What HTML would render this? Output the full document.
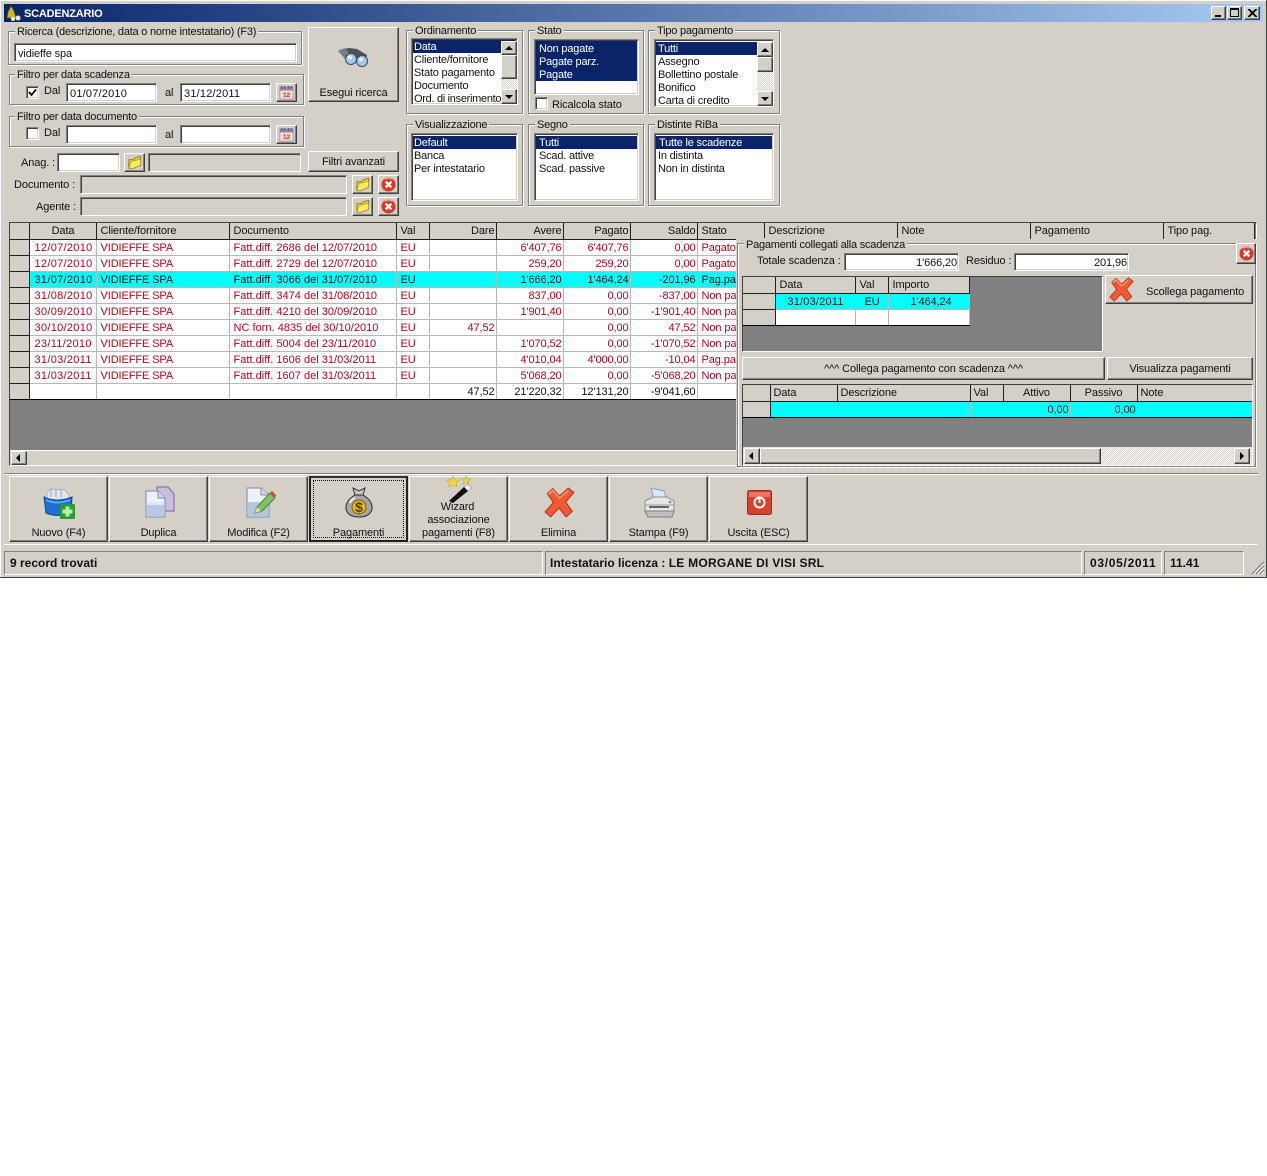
<!DOCTYPE html>
<html><head><meta charset="utf-8"><title>Scadenzario</title>
<style>
html,body{margin:0;padding:0;background:#fff;}
body{width:1267px;height:1176px;position:relative;overflow:hidden;font:11px/13px "Liberation Sans",sans-serif;color:#111;}
div,span,svg,table{position:absolute;box-sizing:border-box;}
td,th,td *{position:static;}
.t{white-space:nowrap;height:13px;padding-top:1px;letter-spacing:-.12px;}
.g{border:1px solid #808080;box-shadow:inset 1px 1px 0 #fff,1px 1px 0 #fff;}
.l{background:#d4d0c8;padding:1px 2px 0;white-space:nowrap;height:13px;letter-spacing:-.22px;}
.s{background:#fff;border:1px solid;border-color:#808080 #fff #fff #808080;box-shadow:inset 1px 1px 0 #404040,inset -1px -1px 0 #d4d0c8;padding:4px 0 0 3px;white-space:nowrap;letter-spacing:-.12px;}
.d{background:#d4d0c8;}
.b{background:#d4d0c8;border:1px solid;border-color:#fff #404040 #404040 #fff;box-shadow:inset -1px -1px 0 #808080;text-align:center;white-space:nowrap;letter-spacing:-.12px;}
.li{white-space:nowrap;left:3px;right:1px;height:13px;padding:1px 0 0 1px;letter-spacing:-.2px;}
.sel{background:#0a246a;color:#fff;}
.ck{background:conic-gradient(#fff 25%,#d4d0c8 0 50%,#fff 0 75%,#d4d0c8 0) 0 0/2px 2px;}
table{border-collapse:collapse;table-layout:fixed;}
td,th{box-sizing:border-box;padding:1px 3px 0;height:16px;line-height:14px;white-space:nowrap;overflow:hidden;font-weight:normal;border-right:1px solid #b8b8b8;border-bottom:1px solid #b8b8b8;letter-spacing:-.1px;text-align:left;}
th{background:#d4d0c8;border-right:1px solid #202020;border-bottom:1px solid #202020;color:#111;}
tr.r td{color:#c00018;background:#fff;}
tr.c td{background:#00ffff;color:#111;}
tr.k td{background:#fff;color:#111;}
tr td.i,tr.r td.i,tr.c td.i,tr.k td.i{background:#d4d0c8;border-right:1px solid #202020;border-bottom:1px solid #202020;}
#m td,#m th,#p td,#p th{padding-left:4px;}
#m tr td:nth-child(2){padding-left:5px;letter-spacing:.3px;}
#m tr td:nth-child(4){letter-spacing:.02px;}
th.n,td.n{text-align:right;padding-right:1px;}
th.cn,td.cn{text-align:center;}
.st{font-size:12px;font-weight:bold;letter-spacing:0;}
</style></head><body>
<svg width="0" height="0" style="left:0;top:0"><defs>
<symbol id="folder" viewBox="0 0 16 16"><path d="M2 5 L7 5 L9 3 L14.500 1.500 L14.500 11 L6 14.500 L2 14.500 Z" fill="#f0d838" stroke="#8a7a20"/><path d="M2 14.500 L4 7 L14.500 4.500 L14.500 11 L6 14.500 Z" fill="#fdec60" stroke="#a08d28" stroke-width=".7"/></symbol>
<symbol id="xr" viewBox="0 0 16 16"><circle cx="8" cy="8" r="7.500" fill="#d93a2c"/><path d="M4 2.500a7 7 0 0 1 8 0" fill="none" stroke="#f5a090" stroke-width="1.500"/><path d="M5 5 L11 11 M11 5 L5 11" stroke="#fff" stroke-width="2.400"/></symbol>
<symbol id="cal" viewBox="0 0 16 16"><rect x="1" y="2" width="14" height="13" fill="#f5f3ee" stroke="#9a93a8"/><rect x="1" y="2" width="14" height="4" fill="#8f86b5"/><path d="M3 1v3M6 1v3M10 1v3M13 1v3" stroke="#555"/><rect x="3" y="7" width="10" height="7" fill="#f7cfc0"/><text x="8" y="13" font-size="7" font-weight="bold" text-anchor="middle" fill="#c8402c" font-family="Liberation Sans">12</text></symbol>
<symbol id="bigx" viewBox="0 0 28 28"><path d="M3 6 L8 1.500 L14 8 L22 1 L27 5 L19.500 13.500 L25.500 22 L20 27 L13.500 19 L6 27 L1 22.500 L8.500 14 Z" fill="#ef5a30" stroke="#b5371c" stroke-linejoin="round"/><path d="M4 6.500 L8 3 L14 10 L22 3" fill="none" stroke="#fb9a70" stroke-width="1.500"/></symbol>
</defs></svg>

<!-- window -->
<div style="left:0;top:0;width:1267px;height:578px;background:#d4d0c8;border-right:1px solid #404040;border-bottom:1px solid #404040;box-shadow:inset 1px 1px 0 #fff"></div>
<div style="left:4px;top:4px;width:1259px;height:18px;background:linear-gradient(90deg,#0a246a,#a6caf0)"></div>
<svg style="left:5px;top:5px" width="17" height="16" viewBox="0 0 17 16"><path d="M6 1 L9 6 L11 13 L2 13 L3 7 Z" fill="#c9b820" stroke="#5a5208" stroke-width=".7"/><circle cx="13" cy="13" r="2.500" fill="#e8e8d8"/><circle cx="8" cy="14" r="2" fill="#f2f2e0"/></svg>
<div class="t" style="left:24px;top:7px;color:#fff;font-weight:bold;font-size:11px;letter-spacing:-.2px">SCADENZARIO</div>
<div class="b" style="left:1211px;top:6px;width:15px;height:14px"><div style="left:3px;top:8px;width:6px;height:2px;background:#000"></div></div>
<div class="b" style="left:1227px;top:6px;width:15px;height:14px"><div style="left:2px;top:1px;width:9px;height:9px;border:1px solid #000;border-top-width:2px"></div></div>
<div class="b" style="left:1244px;top:6px;width:16px;height:14px"><svg style="left:3px;top:2px" width="9" height="8"><path d="M0 0L8 8M1 0L9 8M8 0L0 8M9 0L1 8" stroke="#000"/></svg></div>

<!-- Ricerca -->
<div class="g" style="left:8px;top:31px;width:294px;height:34px"></div>
<div class="l" style="left:15px;top:25px">Ricerca (descrizione, data o nome intestatario) (F3)</div>
<div class="s" style="left:14px;top:43px;width:283px;height:19px">vidieffe spa</div>

<div class="g" style="left:9px;top:74px;width:295px;height:31px"></div>
<div class="l" style="left:15px;top:68px">Filtro per data scadenza</div>
<div class="s" style="left:26px;top:86px;width:13px;height:13px;padding:0"><svg style="left:1px;top:1px" width="9" height="9"><path d="M1 4 L3.500 7 L8 1.500" fill="none" stroke="#000" stroke-width="1.800"/></svg></div>
<div class="t" style="left:44px;top:84px">Dal</div>
<div class="s" style="left:66px;top:83px;width:91px;height:19px;letter-spacing:.2px">01/07/2010</div>
<div class="t" style="left:165px;top:86px">al</div>
<div class="s" style="left:180px;top:83px;width:91px;height:19px;letter-spacing:.2px">31/12/2011</div>
<div class="b" style="left:276px;top:83px;width:21px;height:19px"><svg style="left:2px;top:1px" width="15" height="15"><use href="#cal"/></svg></div>

<div class="g" style="left:9px;top:116px;width:295px;height:31px"></div>
<div class="l" style="left:15px;top:110px">Filtro per data documento</div>
<div class="s" style="left:26px;top:127px;width:13px;height:13px"></div>
<div class="t" style="left:44px;top:126px">Dal</div>
<div class="s" style="left:66px;top:125px;width:91px;height:19px"></div>
<div class="t" style="left:165px;top:128px">al</div>
<div class="s" style="left:180px;top:125px;width:91px;height:19px"></div>
<div class="b" style="left:276px;top:125px;width:21px;height:19px"><svg style="left:2px;top:1px" width="15" height="15"><use href="#cal"/></svg></div>

<div class="b" style="left:308px;top:27px;width:91px;height:75px"></div>
<svg style="left:337px;top:46px" width="32" height="22" viewBox="0 0 32 22"><path d="M2 4 L12 2 L20 3 L30 9 L28 17 L20 12 L12 10 Z" fill="#4e5058"/><path d="M1 5 L8 2 L14 9 L9 14 Z" fill="#777c86"/><circle cx="14" cy="13" r="5.500" fill="#a8c8ea" stroke="#3c4a62"/><circle cx="25" cy="15" r="5.500" fill="#a8c8ea" stroke="#3c4a62"/><circle cx="13" cy="11.500" r="2" fill="#e4f0fb"/><circle cx="24" cy="13.500" r="2" fill="#e4f0fb"/></svg>
<div class="t" style="left:308px;top:86px;width:91px;text-align:center">Esegui ricerca</div>

<div class="t" style="left:21px;top:156px">Anag. :</div>
<div class="s" style="left:57px;top:153px;width:63px;height:19px"></div>
<div class="b" style="left:124px;top:153px;width:21px;height:19px"><svg style="left:2px;top:1px" width="15" height="15"><use href="#folder"/></svg></div>
<div class="s d" style="left:148px;top:153px;width:153px;height:19px"></div>
<div class="b" style="left:308px;top:151px;width:91px;height:21px;line-height:21px">Filtri avanzati</div>

<div class="t" style="left:14px;top:178px">Documento :</div>
<div class="s d" style="left:80px;top:175px;width:267px;height:19px"></div>
<div class="b" style="left:352px;top:175px;width:21px;height:19px"><svg style="left:2px;top:1px" width="15" height="15"><use href="#folder"/></svg></div>
<div class="b" style="left:378px;top:175px;width:21px;height:19px"><svg style="left:2px;top:1px" width="15" height="15"><use href="#xr"/></svg></div>
<div class="t" style="left:36px;top:200px">Agente :</div>
<div class="s d" style="left:80px;top:197px;width:267px;height:19px"></div>
<div class="b" style="left:352px;top:197px;width:21px;height:19px"><svg style="left:2px;top:1px" width="15" height="15"><use href="#folder"/></svg></div>
<div class="b" style="left:378px;top:197px;width:21px;height:19px"><svg style="left:2px;top:1px" width="15" height="15"><use href="#xr"/></svg></div>

<!-- Ordinamento -->
<div class="g" style="left:406px;top:30px;width:117px;height:84px"></div>
<div class="l" style="left:413px;top:24px">Ordinamento</div>
<div class="s" style="left:411px;top:38px;width:107px;height:67px;padding:0">
 <div class="li sel" style="top:1px;left:1px;right:1px;height:13px">Data</div>
 <div class="li" style="top:14px;left:1px">Cliente/fornitore</div>
 <div class="li" style="top:27px;left:1px">Stato pagamento</div>
 <div class="li" style="top:40px;left:1px">Documento</div>
 <div class="li" style="top:53px;left:1px;letter-spacing:-.3px">Ord. di inserimento</div>
 <div class="ck" style="left:89px;top:2px;width:16px;height:63px"></div>
 <div class="b" style="left:89px;top:2px;width:16px;height:14px"><svg style="left:3px;top:4px" width="9" height="5"><path d="M4 0L8 4H0Z"/></svg></div>
 <div class="b" style="left:89px;top:16px;width:16px;height:24px"></div>
 <div class="b" style="left:89px;top:50px;width:16px;height:15px"><svg style="left:3px;top:5px" width="9" height="5"><path d="M0 0H8L4 4Z"/></svg></div>
</div>

<!-- Stato -->
<div class="g" style="left:528px;top:30px;width:116px;height:84px"></div>
<div class="l" style="left:535px;top:24px">Stato</div>
<div class="s" style="left:534px;top:39px;width:105px;height:56px;padding:0">
 <div class="sel" style="left:1px;top:1px;right:1px;height:40px"></div>
 <div class="li" style="top:2px;color:#fff">Non pagate</div>
 <div class="li" style="top:15px;color:#fff">Pagate parz.</div>
 <div class="li" style="top:28px;color:#fff">Pagate</div>
</div>
<div class="s" style="left:535px;top:97px;width:13px;height:13px"></div>
<div class="t" style="left:552px;top:98px">Ricalcola stato</div>

<!-- Tipo -->
<div class="g" style="left:648px;top:30px;width:132px;height:84px"></div>
<div class="l" style="left:655px;top:24px">Tipo pagamento</div>
<div class="s" style="left:654px;top:39px;width:120px;height:68px;padding:0">
 <div class="li sel" style="top:2px;left:1px;padding-left:2px">Tutti</div>
 <div class="li" style="top:15px;left:2px">Assegno</div>
 <div class="li" style="top:28px;left:2px">Bollettino postale</div>
 <div class="li" style="top:41px;left:2px">Bonifico</div>
 <div class="li" style="top:54px;left:2px">Carta di credito</div>
 <div class="ck" style="left:102px;top:2px;width:16px;height:64px"></div>
 <div class="b" style="left:102px;top:2px;width:16px;height:15px"><svg style="left:3px;top:5px" width="9" height="5"><path d="M4 0L8 4H0Z"/></svg></div>
 <div class="b" style="left:102px;top:17px;width:16px;height:15px"></div>
 <div class="b" style="left:102px;top:51px;width:16px;height:15px"><svg style="left:3px;top:5px" width="9" height="5"><path d="M0 0H8L4 4Z"/></svg></div>
</div>

<!-- Row 2 -->
<div class="g" style="left:406px;top:124px;width:117px;height:82px"></div>
<div class="l" style="left:413px;top:118px">Visualizzazione</div>
<div class="s" style="left:411px;top:133px;width:107px;height:68px;padding:0">
 <div class="li sel" style="top:2px;left:1px">Default</div>
 <div class="li" style="top:15px;left:1px">Banca</div>
 <div class="li" style="top:28px;left:1px">Per intestatario</div>
</div>
<div class="g" style="left:528px;top:124px;width:116px;height:82px"></div>
<div class="l" style="left:535px;top:118px">Segno</div>
<div class="s" style="left:534px;top:133px;width:105px;height:68px;padding:0">
 <div class="li sel" style="top:2px;left:1px;padding-left:3px">Tutti</div>
 <div class="li" style="top:15px">Scad. attive</div>
 <div class="li" style="top:28px">Scad. passive</div>
</div>
<div class="g" style="left:648px;top:124px;width:132px;height:82px"></div>
<div class="l" style="left:655px;top:118px">Distinte RiBa</div>
<div class="s" style="left:654px;top:133px;width:120px;height:68px;padding:0">
 <div class="li sel" style="top:2px;left:1px;right:1px;padding-left:3px">Tutte le scadenze</div>
 <div class="li" style="top:15px;left:2px">In distinta</div>
 <div class="li" style="top:28px;left:2px">Non in distinta</div>
</div>

<!-- Main grid -->
<div style="left:9px;top:222px;width:1248px;height:244px;background:#808080;border:1px solid;border-color:#404040 #fff #fff #404040;overflow:hidden">
<table id="m" style="left:0;top:0;width:1244px">
<colgroup><col style="width:19px"><col style="width:67px"><col style="width:133px"><col style="width:167px"><col style="width:33px"><col style="width:67px"><col style="width:67px"><col style="width:67px"><col style="width:67px"><col style="width:67px"><col style="width:133px"><col style="width:133px"><col style="width:133px"><col style="width:91px"></colgroup>
<tr><th></th><th class="cn">Data</th><th>Cliente/fornitore</th><th>Documento</th><th>Val</th><th class="n">Dare</th><th class="n">Avere</th><th class="n">Pagato</th><th class="n">Saldo</th><th>Stato</th><th>Descrizione</th><th>Note</th><th>Pagamento</th><th>Tipo pag.</th></tr>
<tr class="r"><td class="i"></td><td>12/07/2010</td><td>VIDIEFFE SPA</td><td>Fatt.diff. 2686 del 12/07/2010</td><td>EU</td><td class="n"></td><td class="n">6'407,76</td><td class="n">6'407,76</td><td class="n">0,00</td><td>Pagato</td></tr>
<tr class="r"><td class="i"></td><td>12/07/2010</td><td>VIDIEFFE SPA</td><td>Fatt.diff. 2729 del 12/07/2010</td><td>EU</td><td class="n"></td><td class="n">259,20</td><td class="n">259,20</td><td class="n">0,00</td><td>Pagato</td></tr>
<tr class="c"><td class="i"></td><td>31/07/2010</td><td>VIDIEFFE SPA</td><td>Fatt.diff. 3066 del 31/07/2010</td><td>EU</td><td class="n"></td><td class="n">1'666,20</td><td class="n">1'464,24</td><td class="n">-201,96</td><td>Pag.parz.</td></tr>
<tr class="r"><td class="i"></td><td>31/08/2010</td><td>VIDIEFFE SPA</td><td>Fatt.diff. 3474 del 31/08/2010</td><td>EU</td><td class="n"></td><td class="n">837,00</td><td class="n">0,00</td><td class="n">-837,00</td><td>Non pagata</td></tr>
<tr class="r"><td class="i"></td><td>30/09/2010</td><td>VIDIEFFE SPA</td><td>Fatt.diff. 4210 del 30/09/2010</td><td>EU</td><td class="n"></td><td class="n">1'901,40</td><td class="n">0,00</td><td class="n">-1'901,40</td><td>Non pagata</td></tr>
<tr class="r"><td class="i"></td><td>30/10/2010</td><td>VIDIEFFE SPA</td><td>NC forn. 4835 del 30/10/2010</td><td>EU</td><td class="n">47,52</td><td class="n"></td><td class="n">0,00</td><td class="n">47,52</td><td>Non pagata</td></tr>
<tr class="r"><td class="i"></td><td>23/11/2010</td><td>VIDIEFFE SPA</td><td>Fatt.diff. 5004 del 23/11/2010</td><td>EU</td><td class="n"></td><td class="n">1'070,52</td><td class="n">0,00</td><td class="n">-1'070,52</td><td>Non pagata</td></tr>
<tr class="r"><td class="i"></td><td>31/03/2011</td><td>VIDIEFFE SPA</td><td>Fatt.diff. 1606 del 31/03/2011</td><td>EU</td><td class="n"></td><td class="n">4'010,04</td><td class="n">4'000,00</td><td class="n">-10,04</td><td>Pag.parz.</td></tr>
<tr class="r"><td class="i"></td><td>31/03/2011</td><td>VIDIEFFE SPA</td><td>Fatt.diff. 1607 del 31/03/2011</td><td>EU</td><td class="n"></td><td class="n">5'068,20</td><td class="n">0,00</td><td class="n">-5'068,20</td><td>Non pagata</td></tr>
<tr class="k"><td class="i" style="border-bottom-color:#000"></td><td style="border-bottom-color:#000"></td><td style="border-bottom-color:#000"></td><td style="border-bottom-color:#000"></td><td style="border-bottom-color:#000"></td><td class="n" style="border-bottom-color:#000">47,52</td><td class="n" style="border-bottom-color:#000">21'220,32</td><td class="n" style="border-bottom-color:#000">12'131,20</td><td class="n" style="border-bottom-color:#000">-9'041,60</td><td style="border-bottom-color:#000"></td></tr>
</table>
<div style="left:0;top:227px;width:1245px;height:15px;background:#d4d0c8;box-shadow:inset 0 1px 0 #fff"></div>
<div class="b" style="left:1px;top:228px;width:16px;height:14px"><svg style="left:4px;top:2px" width="6" height="9"><path d="M4 0V8L0 4Z"/></svg></div>
</div>

<!-- Side panel -->
<div style="left:736px;top:239px;width:521px;height:229px;background:#d4d0c8"></div>
<div class="g" style="left:737px;top:243px;width:519px;height:224px"></div>
<div class="l" style="left:744px;top:238px">Pagamenti collegati alla scadenza</div>
<div class="t" style="left:757px;top:254px">Totale scadenza :</div>
<div class="s" style="left:844px;top:253px;width:115px;height:18px;text-align:right;padding:3px 1px 0 0">1'666,20</div>
<div class="t" style="left:966px;top:254px">Residuo :</div>
<div class="s" style="left:1014px;top:253px;width:115px;height:18px;text-align:right;padding:3px 1px 0 0">201,96</div>
<div class="b" style="left:1236px;top:243px;width:20px;height:21px"><svg style="left:2px;top:2px" width="15" height="15"><use href="#xr"/></svg></div>

<div style="left:742px;top:276px;width:361px;height:76px;background:#808080;border:1px solid;border-color:#404040 #fff #fff #404040">
<table id="p" style="left:0;top:0;width:226px">
<colgroup><col style="width:32px"><col style="width:80px"><col style="width:33px"><col style="width:81px"></colgroup>
<tr><th></th><th>Data</th><th>Val</th><th>Importo</th></tr>
<tr class="c"><td class="i"></td><td class="cn" style="letter-spacing:.2px">31/03/2011</td><td class="cn">EU</td><td class="cn" style="padding-left:8px">1'464,24</td></tr>
<tr class="k"><td class="i" style="border-bottom-color:#000"></td><td style="border-bottom-color:#000"></td><td style="border-bottom-color:#000"></td><td style="border-bottom-color:#000"></td></tr>
</table>
</div>
<div class="b" style="left:1105px;top:275px;width:148px;height:29px"></div>
<svg style="left:1109px;top:277px" width="25" height="25"><use href="#bigx"/></svg>
<div class="t" style="left:1146px;top:285px">Scollega pagamento</div>
<div class="b" style="left:742px;top:357px;width:363px;height:23px;line-height:23px">^^^ Collega pagamento con scadenza ^^^</div>
<div class="b" style="left:1107px;top:357px;width:146px;height:23px;line-height:23px">Visualizza pagamenti</div>

<div style="left:742px;top:384px;width:511px;height:82px;background:#808080;border:1px solid;border-color:#404040 #fff #fff #404040;overflow:hidden">
<table style="left:0;top:0;width:509px">
<colgroup><col style="width:27px"><col style="width:67px"><col style="width:133px"><col style="width:33px"><col style="width:67px"><col style="width:67px"><col style="width:115px"></colgroup>
<tr><th></th><th>Data</th><th>Descrizione</th><th>Val</th><th class="cn">Attivo</th><th class="cn">Passivo</th><th style="border-right:0">Note</th></tr>
<tr class="c"><td class="i" style="border-bottom-color:#000"></td><td style="border-bottom-color:#000"></td><td style="border-bottom-color:#000"></td><td style="border-bottom-color:#000"></td><td class="n" style="border-bottom-color:#000">0,00</td><td class="n" style="border-bottom-color:#000">0,00</td><td style="border-bottom-color:#000;border-right:0"></td></tr>
</table>
<div class="ck" style="left:0;top:62px;width:509px;height:18px"></div>
<div class="b" style="left:1px;top:63px;width:16px;height:16px"><svg style="left:4px;top:3px" width="6" height="9"><path d="M4 0V8L0 4Z"/></svg></div>
<div class="b" style="left:17px;top:63px;width:341px;height:16px"></div>
<div class="b" style="left:491px;top:63px;width:16px;height:16px"><svg style="left:5px;top:3px" width="6" height="9"><path d="M0 0V8L4 4Z"/></svg></div>
</div>

<!-- Toolbar -->
<div style="left:4px;top:473px;width:1254px;height:2px;border-top:1px solid #808080;border-bottom:1px solid #fff"></div>
<div class="b" style="left:9px;top:476px;width:99px;height:66px"></div>
<div class="b" style="left:109px;top:476px;width:99px;height:66px"></div>
<div class="b" style="left:209px;top:476px;width:99px;height:66px"></div>
<div style="left:309px;top:476px;width:99px;height:66px;background:#d4d0c8;border:2px solid #222;border-top-color:#333"><div style="left:2px;top:2px;width:91px;height:58px;border:1px dotted #000"></div></div>
<div class="b" style="left:409px;top:476px;width:99px;height:66px"></div>
<div class="b" style="left:509px;top:476px;width:99px;height:66px"></div>
<div class="b" style="left:609px;top:476px;width:99px;height:66px"></div>
<div class="b" style="left:709px;top:476px;width:99px;height:66px"></div>

<svg style="left:43px;top:487px" width="33" height="32" viewBox="0 0 33 32"><path d="M4 6 L7 2 L22 3 L26 8 L26 14 L4 14 Z" fill="#dfe6ee" stroke="#aab4c0"/><path d="M8 2v8M13 2v8M18 3v8" stroke="#9aa6b4"/><path d="M1 10 Q14 16 29 10 L28 26 Q15 31 3 26 Z" fill="#1d6fd0" stroke="#0f4a96"/><path d="M3 13 Q14 18 27 13" fill="none" stroke="#5fa8ec" stroke-width="2"/><rect x="17" y="17" width="15" height="15" rx="1" fill="#2a9a3c"/><path d="M24.500 19.500v10M19.500 24.500h10" stroke="#b8f0a0" stroke-width="4"/></svg>
<svg style="left:144px;top:486px" width="31" height="32" viewBox="0 0 31 32"><path d="M13 1 L24 1 L30 8 L30 25 L13 25 Z" fill="#c9bce0" stroke="#74689a"/><path d="M2 5 L14 5 L21 12 L21 31 L2 31 Z" fill="#eef2f8" stroke="#7a8aa8"/><path d="M14 5 L14 12 L21 12" fill="#d4dcec" stroke="#7a8aa8"/><rect x="3" y="16" width="17" height="14" fill="#b8c8e2"/><rect x="3" y="16" width="17" height="3" fill="#dfe6f2"/></svg>
<svg style="left:245px;top:486px" width="32" height="32" viewBox="0 0 32 32"><path d="M2 2 L16 2 L24 9 L24 31 L2 31 Z" fill="#eef2f8" stroke="#7a8aa8"/><path d="M16 2 L16 9 L24 9" fill="#d4dcec" stroke="#7a8aa8"/><rect x="3" y="16" width="20" height="14" fill="#b4c6e0"/><path d="M10 27 L12 21 L25 7 L30 12 L17 25 Z" fill="#7cc462" stroke="#3f8a30"/><path d="M25 7 L27 5 L31 9 L30 12 Z" fill="#d94a30"/><path d="M10 27 L12 21 L16 25 Z" fill="#e8d8b0"/></svg>
<svg style="left:345px;top:487px" width="28" height="31" viewBox="0 0 28 31"><path d="M8 1 L14 4 L20 1 L18 8 L10 8 Z" fill="#c8c8c8" stroke="#333"/><path d="M10 8 Q0 14 1 22 Q3 30 14 30 Q25 30 27 22 Q28 14 18 8 Z" fill="#a6a6a6" stroke="#2a2a2a"/><path d="M5 16 Q6 12 10 11" stroke="#eee" stroke-width="2" fill="none"/><circle cx="14" cy="20" r="7" fill="#e8b820" stroke="#7a5c10"/><text x="14" y="25" font-size="14" font-weight="bold" text-anchor="middle" fill="#5a3c08" font-family="Liberation Sans">$</text></svg>
<svg style="left:445px;top:476px" width="30" height="27" viewBox="0 0 30 27"><path d="M4 25 L19 11 L23 15 L8 27 Z" fill="#111"/><path d="M19 11 L22 8 L27 12 L23 15 Z" fill="#eee" stroke="#777" stroke-width=".5"/><path d="M8 0 L10 4 L14 4 L11 7 L12 11 L8 9 L4 11 L5 7 L1 4 L6 4 Z" fill="#f5d838" stroke="#b8982a" stroke-width=".5"/><path d="M21 0 L22 3 L26 3 L23 5 L24 8 L21 6 L18 8 L19 5 L16 3 L20 3 Z" fill="#f5d838" stroke="#b8982a" stroke-width=".5"/></svg>
<svg style="left:544px;top:487px" width="31" height="31" viewBox="0 0 28 28"><use href="#bigx"/></svg>
<svg style="left:643px;top:487px" width="33" height="31" viewBox="0 0 33 31"><path d="M8 1 L21 4 L25 16 L12 16 Z" fill="#d8e8f6" stroke="#8aa0b8"/><path d="M2 14 L10 10 L24 10 L31 14 L31 24 L2 24 Z" fill="#e6e6e4" stroke="#8c8c8c"/><path d="M2 18 L31 18" stroke="#9a9a9a"/><circle cx="27" cy="15" r="1.300" fill="#38b050"/><path d="M2 24 L31 24 L29 30 L5 30 Z" fill="#bebebe" stroke="#7c7c7c"/><path d="M6 20 H26" stroke="#666" stroke-width="2"/></svg>
<svg style="left:747px;top:490px" width="25" height="25" viewBox="0 0 25 25"><rect x=".5" y=".5" width="24" height="24" rx="2" fill="#d6402c" stroke="#a42a1c"/><rect x="2" y="2" width="21" height="5" fill="#ea7462"/><circle cx="12.500" cy="12.500" r="5" fill="none" stroke="#fff" stroke-width="2"/><path d="M12.500 8v5" stroke="#fff" stroke-width="2"/></svg>

<div class="t" style="left:9px;top:526px;width:99px;text-align:center">Nuovo (F4)</div>
<div class="t" style="left:109px;top:526px;width:99px;text-align:center">Duplica</div>
<div class="t" style="left:209px;top:526px;width:99px;text-align:center">Modifica (F2)</div>
<div class="t" style="left:309px;top:526px;width:99px;text-align:center">Pagamenti</div>
<div class="t" style="left:409px;top:500px;width:99px;text-align:center;padding-right:2px">Wizard</div>
<div class="t" style="left:409px;top:513px;width:99px;text-align:center">associazione</div>
<div class="t" style="left:409px;top:526px;width:99px;text-align:center">pagamenti (F8)</div>
<div class="t" style="left:509px;top:526px;width:99px;text-align:center">Elimina</div>
<div class="t" style="left:609px;top:526px;width:99px;text-align:center">Stampa (F9)</div>
<div class="t" style="left:709px;top:526px;width:99px;text-align:center">Uscita (ESC)</div>

<!-- Status bar -->
<div style="left:4px;top:544px;width:1254px;height:2px;border-top:1px solid #fff"></div>
<div style="left:4px;top:551px;width:539px;height:24px;border:1px solid;border-color:#808080 #fff #fff #808080"></div>
<div style="left:545px;top:551px;width:537px;height:24px;border:1px solid;border-color:#808080 #fff #fff #808080"></div>
<div style="left:1084px;top:551px;width:78px;height:24px;border:1px solid;border-color:#808080 #fff #fff #808080"></div>
<div style="left:1164px;top:551px;width:80px;height:24px;border:1px solid;border-color:#808080 #fff #fff #808080"></div>
<div class="t st" style="left:10px;top:556px">9 record trovati</div>
<div class="t st" style="left:550px;top:556px">Intestatario licenza : <span style="position:static;letter-spacing:.25px">LE MORGANE DI VISI SRL</span></div>
<div class="t st" style="left:1090px;top:556px;letter-spacing:.7px">03/05/2011</div>
<div class="t st" style="left:1170px;top:556px">11.41</div>
<svg style="left:1251px;top:561px" width="14" height="14"><path d="M13 1L1 13M13 5L5 13M13 9L9 13" stroke="#808080" stroke-width="1.500"/><path d="M13 2.500L2.500 13M13 6.500L6.500 13M13 10.500L10.500 13" stroke="#fff"/></svg>
</body></html>
